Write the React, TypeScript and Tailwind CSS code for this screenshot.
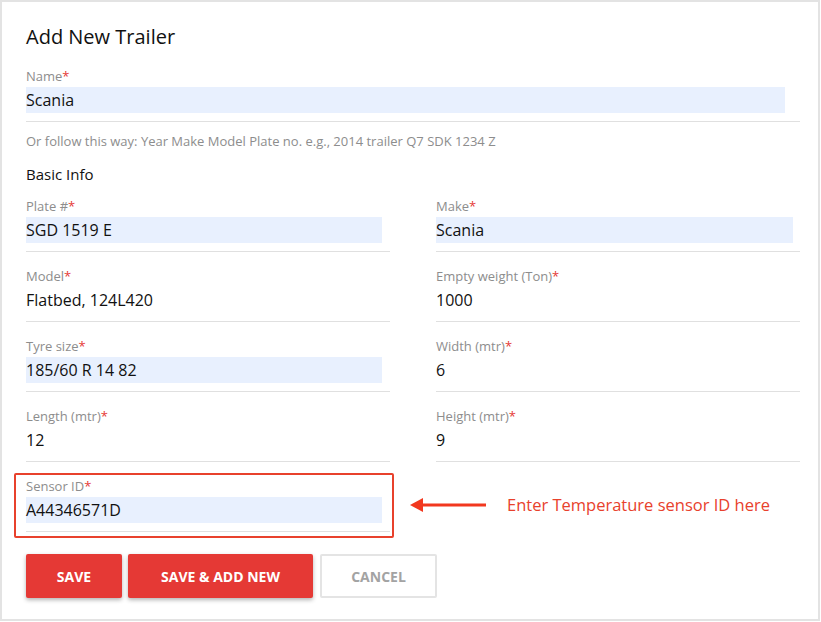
import React from "react";

type FieldProps = {
  label: string;
  value: string;
  filled?: boolean;
  fillWidth?: string;
};

function Field({ label, value, filled, fillWidth = "w-[356px]" }: FieldProps) {
  return (
    <div className="flex flex-col">
      <div className="h-[18px] text-[13px] leading-[18px] text-[#8d8d8d]">
        {label}
        <span className="text-[#e53935]">*</span>
      </div>
      <div
        className={`mt-[2px] h-[26px] ${fillWidth} text-[16px] leading-[26px] text-[#111] ${
          filled ? "bg-[#e8f0fe]" : ""
        }`}
      >
        {value}
      </div>
      <div className="mt-[8px] h-px bg-[#e0e0e0]" />
    </div>
  );
}

export default function App() {
  return (
    <div
      className="w-[820px] h-[621px] border-2 border-[#e3e3e3] bg-white"
      style={{ fontFamily: '"Open Sans", "Noto Sans", sans-serif' }}
    >
      <div className="w-[798px] pl-[24px] pt-[21px]">
        {/* Title */}
        <h2 className="h-[28px] text-[20px] leading-[28px] text-[#111]">Add New Trailer</h2>

        {/* Name */}
        <div className="mt-[16px] w-[774px]">
          <Field label="Name" value="Scania" filled fillWidth="w-[759px]" />
        </div>
        <p className="mt-[10px] h-[18px] text-[13px] leading-[18px] text-[#8d8d8d]">
          Or follow this way: Year Make Model Plate no. e.g., 2014 trailer Q7 SDK 1234 Z
        </p>

        <div className="mt-[13px] h-[22px] text-[15px] leading-[22px] text-[#111]">Basic Info</div>

        {/* Basic info grid */}
        <div className="mt-[12px] grid w-[774px] grid-cols-2 gap-x-[46px] gap-y-[15px]">
          <Field label="Plate #" value="SGD 1519 E" filled />
          <Field label="Make" value="Scania" filled fillWidth="w-[357px]" />
          <Field label="Model" value="Flatbed, 124L420" />
          <Field label="Empty weight (Ton)" value="1000" />
          <Field label="Tyre size" value="185/60 R 14 82" filled />
          <Field label="Width (mtr)" value="6" />
          <Field label="Length (mtr)" value="12" />
          <Field label="Height (mtr)" value="9" />
          <div className="relative">
            <Field label="Sensor ID" value="A44346571D" filled />
            <div className="pointer-events-none absolute left-[-12px] top-[-4px] h-[65px] w-[380px] rounded-[2px] border-2 border-solid border-[#e8412c]" />
          </div>
          <div className="flex items-center">
            <div className="ml-[-26px] flex items-center">
              <svg width="78" height="16" viewBox="0 0 78 16">
                <polygon points="0,8 13,1 13,15" fill="#f2381f" />
                <rect x="12" y="6.5" width="64" height="3" fill="#f2381f" />
              </svg>
              <span className="ml-[19px] text-[16.5px] leading-[22px] text-[#e8412c]">
                Enter Temperature sensor ID here
              </span>
            </div>
          </div>
        </div>

        {/* Actions */}
        <div className="mt-[22px] flex items-center">
          <button className="h-[44px] w-[96px] rounded-[2px] bg-[#e53935] text-[14px] font-bold text-white shadow-[0_2px_4px_rgba(0,0,0,0.3)]">
            SAVE
          </button>
          <button className="ml-[6px] h-[44px] w-[185px] rounded-[2px] bg-[#e53935] text-[14px] font-bold text-white shadow-[0_2px_4px_rgba(0,0,0,0.3)]">
            SAVE &amp; ADD NEW
          </button>
          <button className="ml-[7px] h-[44px] w-[117px] rounded-[2px] border-2 border-[#e4e4e4] bg-white text-[14px] font-bold text-[#a3a3a3]">
            CANCEL
          </button>
        </div>
      </div>
    </div>
  );
}
